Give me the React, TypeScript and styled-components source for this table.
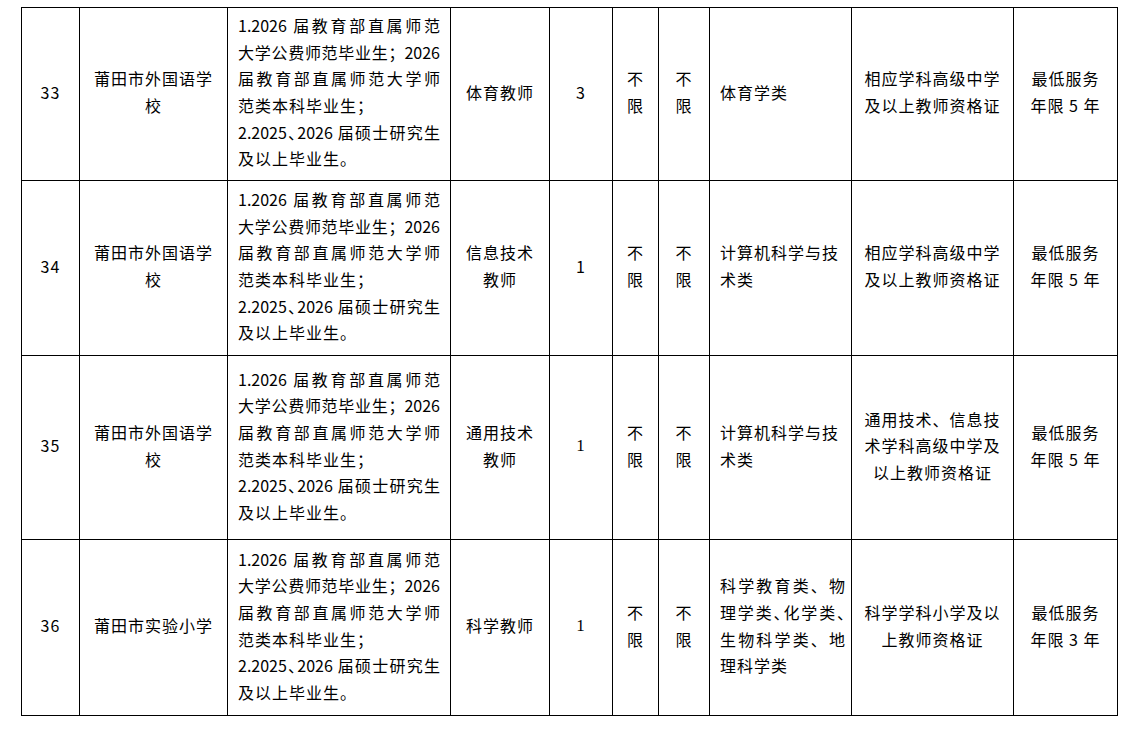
import React from 'react';
import styled, { createGlobalStyle } from 'styled-components';

const GlobalStyle = createGlobalStyle`
  html, body {
    margin: 0;
    padding: 0;
    background: #ffffff;
  }
  body {
    font-family: "Noto Sans CJK SC", "Liberation Sans", sans-serif;
    color: #000000;
  }
`;

type Align = 'left' | 'center';

interface TextLine {
  text: string;
  justify?: boolean;
  halt?: boolean;
}

interface Post {
  no: string;
  school: string[];
  post: string[];
  count: string;
  serifCount?: boolean;
  major: TextLine[];
  cert: string[];
  service: string[];
  height: number;
}

const requirement: TextLine[] = [
  { text: '1.2026 届教育部直属师范', justify: true },
  { text: '大学公费师范毕业生；2026', justify: true },
  { text: '届教育部直属师范大学师', justify: true },
  { text: '范类本科毕业生；' },
  { text: '2.2025、2026 届硕士研究生', justify: true, halt: true },
  { text: '及以上毕业生。' },
];

const widths = [58, 148, 223, 99, 63, 46, 51, 142, 162, 104];

const computerMajor: TextLine[] = [{ text: '计算机科学与技' }, { text: '术类' }];

const posts: Post[] = [
  {
    no: '33',
    school: ['莆田市外国语学', '校'],
    post: ['体育教师'],
    count: '3',
    major: [{ text: '体育学类' }],
    cert: ['相应学科高级中学', '及以上教师资格证'],
    service: ['最低服务', '年限 5 年'],
    height: 173,
  },
  {
    no: '34',
    school: ['莆田市外国语学', '校'],
    post: ['信息技术', '教师'],
    count: '1',
    major: computerMajor,
    cert: ['相应学科高级中学', '及以上教师资格证'],
    service: ['最低服务', '年限 5 年'],
    height: 175,
  },
  {
    no: '35',
    school: ['莆田市外国语学', '校'],
    post: ['通用技术', '教师'],
    count: '1',
    serifCount: true,
    major: computerMajor,
    cert: ['通用技术、信息技', '术学科高级中学及', '以上教师资格证'],
    service: ['最低服务', '年限 5 年'],
    height: 184,
  },
  {
    no: '36',
    school: ['莆田市实验小学'],
    post: ['科学教师'],
    count: '1',
    serifCount: true,
    major: [
      { text: '科学教育类、物', justify: true },
      { text: '理学类、化学类、', justify: true, halt: true },
      { text: '生物科学类、地', justify: true },
      { text: '理科学类' },
    ],
    cert: ['科学学科小学及以', '上教师资格证'],
    service: ['最低服务', '年限 3 年'],
    height: 176,
  },
];

const Page = styled.div`
  padding: 7px 0 0 21px;
`;

const Sheet = styled.table`
  border-collapse: collapse;
  table-layout: fixed;
  width: 1096px;
`;

const Col = styled.col<{ $w: number }>`
  width: ${(p) => p.$w}px;
`;

const Row = styled.tr<{ $h: number }>`
  height: ${(p) => p.$h}px;
`;

const Cell = styled.td<{ $align?: Align; $padL?: number; $padR?: number }>`
  border: 1px solid #000000;
  padding: 0 ${(p) => p.$padR ?? 4}px 4px ${(p) => p.$padL ?? 4}px;
  vertical-align: middle;
  text-align: ${(p) => p.$align ?? 'center'};
  font-size: 16px;
  line-height: 26.6px;
  letter-spacing: 1px;
`;

const Line = styled.div<{ $justify?: boolean; $halt?: boolean }>`
  display: block;
  white-space: ${(p) => (p.$justify ? 'normal' : 'nowrap')};
  letter-spacing: ${(p) => (p.$justify ? '0' : '1px')};
  text-align: ${(p) => (p.$justify ? 'justify' : 'inherit')};
  text-align-last: ${(p) => (p.$justify ? 'justify' : 'auto')};
  font-feature-settings: ${(p) => (p.$halt ? '"halt"' : 'normal')};
`;

const Count = styled.span<{ $serif?: boolean }>`
  font-family: ${(p) =>
    p.$serif ? '"Liberation Serif", serif' : '"Noto Sans CJK SC", "Liberation Sans", sans-serif'};
  font-size: ${(p) => (p.$serif ? '17px' : '16px')};
`;

const Lines = ({ items }: { items: (string | TextLine)[] }) => (
  <>
    {items.map((item, i) => {
      const line = typeof item === 'string' ? { text: item } : item;
      return (
        <Line key={i} $justify={line.justify} $halt={line.halt}>
          {line.text}
        </Line>
      );
    })}
  </>
);

const App = () => (
  <Page>
    <GlobalStyle />
    <Sheet>
      <colgroup>
        {widths.map((w, i) => (
          <Col key={i} $w={w} />
        ))}
      </colgroup>
      <tbody>
        {posts.map((p) => (
          <Row key={p.no} $h={p.height}>
            <Cell>{p.no}</Cell>
            <Cell>
              <Lines items={p.school} />
            </Cell>
            <Cell $align="left" $padL={10} $padR={10}>
              <Lines items={requirement} />
            </Cell>
            <Cell>
              <Lines items={p.post} />
            </Cell>
            <Cell>
              <Count $serif={p.serifCount}>{p.count}</Count>
            </Cell>
            <Cell>
              <Lines items={['不', '限']} />
            </Cell>
            <Cell>
              <Lines items={['不', '限']} />
            </Cell>
            <Cell $align="left" $padL={10} $padR={6}>
              <Lines items={p.major} />
            </Cell>
            <Cell>
              <Lines items={p.cert} />
            </Cell>
            <Cell>
              <Lines items={p.service} />
            </Cell>
          </Row>
        ))}
      </tbody>
    </Sheet>
  </Page>
);

export default App;
